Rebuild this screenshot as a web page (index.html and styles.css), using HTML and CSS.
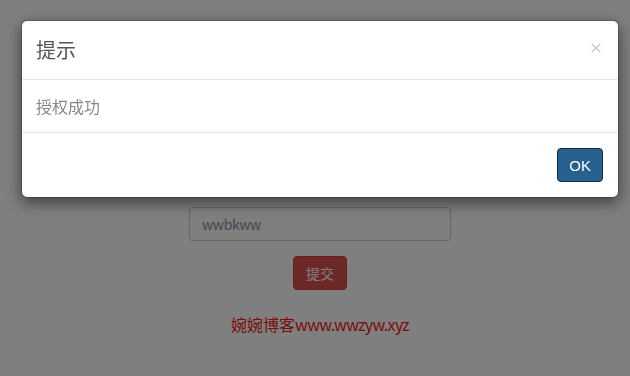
FILE: index.html
```html
<!DOCTYPE html>
<html lang="zh-CN">
<head>
<meta charset="utf-8">
<title>提示</title>
<link rel="stylesheet" href="styles.css">
</head>
<body>
<main class="page">
  <form class="form">
    <input class="field" type="text" value="wwbkww">
    <button class="btn-danger" type="button">提交</button>
  </form>
  <p class="site">婉婉博客<span class="url">www.wwzyw.xyz</span></p>
</main>
<div class="backdrop"></div>
<div class="modal">
  <div class="modal-header">
    <h4 class="modal-title">提示</h4>
    <button class="close" type="button" aria-label="Close">
      <svg width="10" height="10" viewBox="0 0 10 10"><path d="M0.7 0.7L9.3 9.3M9.3 0.7L0.7 9.3" stroke="#c9c9c9" stroke-width="1.4" fill="none"/></svg>
    </button>
  </div>
  <div class="modal-body">授权成功</div>
  <div class="modal-footer">
    <button class="btn-primary" type="button">OK</button>
  </div>
</div>
</body>
</html>
```
FILE: styles.css
```css
html, body {
  margin: 0;
  padding: 0;
  background: #fff;
  overflow: hidden;
  height: 100%;
}
body {
  font-family: "Noto Sans CJK SC", "Noto Sans", sans-serif;
  color: #333;
}
.page {
  display: flex;
  flex-direction: column;
  align-items: center;
  padding: 207px 0 0 10px;
}
.form {
  display: flex;
  flex-direction: column;
  align-items: center;
  gap: 15px;
}
.field {
  box-sizing: border-box;
  width: 262px;
  height: 34px;
  padding: 6px 12px;
  border: 1px solid #ccc;
  border-radius: 4px;
  font: 14px "Noto Sans CJK SC", sans-serif;
  letter-spacing: -0.4px;
  color: #8a8aa6;
  background: #fff;
  outline: none;
}
.btn-danger {
  box-sizing: border-box;
  height: 34px;
  padding: 0 12px;
  border: 1px solid #d43f3a;
  border-radius: 4px;
  background: #d9534f;
  color: #fff;
  font: 14px "Noto Sans CJK SC", sans-serif;
}
.site {
  margin: 22px 0 0;
  font-size: 16px;
  line-height: 24px;
  color: #f21818;
}
.url {
  letter-spacing: -0.7px;
}
.backdrop {
  position: fixed;
  inset: 0;
  background: rgba(0, 0, 0, 0.5);
}
.modal {
  position: fixed;
  top: 20px;
  left: 21px;
  width: 598px;
  box-sizing: border-box;
  background: #fff;
  border: 1px solid rgba(0, 0, 0, 0.2);
  border-radius: 6px;
  box-shadow: 0 5px 15px rgba(0, 0, 0, 0.5);
  background-clip: padding-box;
}
.modal-header {
  display: flex;
  align-items: center;
  justify-content: space-between;
  padding: 15px 15px 15px 14px;
  border-bottom: 1px solid #e5e5e5;
}
.modal-title {
  margin: 0;
  font-size: 20px;
  line-height: 28px;
  font-weight: 400;
  color: #555;
}
.close {
  display: flex;
  padding: 0;
  margin: -4px 2px 0 0;
  border: 0;
  background: none;
}
.modal-body {
  padding: 15px 15px 15px 14px;
  font-size: 16px;
  line-height: 22px;
  color: #888;
}
.modal-footer {
  display: flex;
  justify-content: flex-end;
  padding: 15px;
  border-top: 1px solid #e5e5e5;
}
.btn-primary {
  box-sizing: border-box;
  height: 34px;
  padding: 0 11px;
  border: 1px solid #122b40;
  border-radius: 4px;
  background: #286090;
  color: #fff;
  font: 15px "Liberation Sans", Arial, sans-serif;
}
```
